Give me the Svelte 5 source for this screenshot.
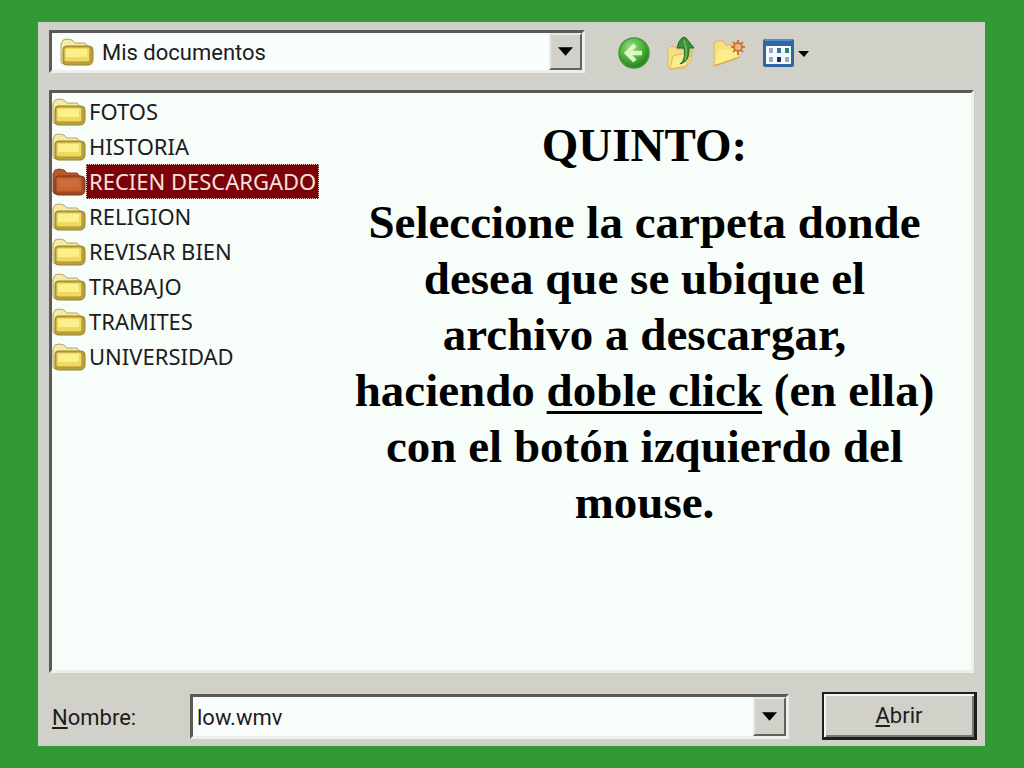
<script lang="ts">
  const folders = [
    "FOTOS",
    "HISTORIA",
    "RECIEN DESCARGADO",
    "RELIGION",
    "REVISAR BIEN",
    "TRABAJO",
    "TRAMITES",
    "UNIVERSIDAD"
  ];

  let selected = $state("RECIEN DESCARGADO");
  let location = $state("Mis documentos");
  let fileName = $state("low.wmv");
</script>

{#snippet folderIcon()}
  <svg class="folder" viewBox="0 0 34 28" aria-hidden="true">
    <path class="folder-back" d="M1 23V6l2-4 4-1 5 1 3 3h10l2 2v4H7v15H4q-3 0-3-3Z" />
    <path class="folder-shade" d="M6 8h23q4 0 4 4v9q0 6-5 6H6q-3 0-3-4V12q0-4 3-4Z" />
    <path class="folder-front" d="M6 9h22q2 0 2 2v11q0 2-2 2H6q-2 0-2-2V11q0-2 2-2Z" />
    <path class="folder-glow" d="M6 11h21v8H6z" />
  </svg>
{/snippet}

{#snippet arrow()}
  <svg class="arrow" viewBox="0 0 16 9" aria-hidden="true">
    <path d="M0 0h16L8 9Z" />
  </svg>
{/snippet}

<main class="slide">
  <div class="dialog">
    <div class="toolbar">
      <div class="field location">
        {@render folderIcon()}
        <select bind:value={location} aria-label="Buscar en">
          <option>Mis documentos</option>
        </select>
        <span class="drop">{@render arrow()}</span>
      </div>

      <div class="tools">
        <button class="tool" aria-label="Atrás">
          <svg width="34" height="34" viewBox="0 0 34 34">
            <defs>
              <radialGradient id="ball" cx="0.4" cy="0.3" r="0.7">
                <stop offset="0" stop-color="#9bdc82" />
                <stop offset="0.55" stop-color="#51b43e" />
                <stop offset="1" stop-color="#23801f" />
              </radialGradient>
            </defs>
            <circle cx="17" cy="17" r="15" fill="url(#ball)" stroke="#3c9a35" stroke-width="1.5" />
            <path d="m18 9-8 8 8 8M10 17h15" fill="none" stroke="#e0f6c8" stroke-width="4.5" />
          </svg>
        </button>
        <button class="tool" aria-label="Subir un nivel">
          <svg width="30" height="36" viewBox="0 0 30 36">
            <path d="M2 13 4 11l5 1 2 2 15 0-1 12-6 7-16 1-1-2Z" fill="#f5df80" stroke="#dfb86c" />
            <path d="m4 34 3-13 19-5-6 15Z" fill="#fbee90" stroke="#dfb45c" />
            <path d="M14 29q6-4 4-16l-7 0q1-7 6-11l3 1 8 10-5 0q1 14-9 16Z" fill="#3a9138" stroke="#236b27" />
            <path d="M18 5q4 12 1 20" fill="none" stroke="#72bd5a" stroke-width="1.5" />
          </svg>
        </button>
        <button class="tool" aria-label="Crear nueva carpeta">
          <svg width="36" height="32" viewBox="0 0 36 32">
            <path d="M3 29V6l3-2h6l3 4h9l4 11Z" fill="#f8e07c" stroke="#e0b060" />
            <path d="m4 28 4-15 14 0 7 7Z" fill="#fdee8c" />
            <path d="M3 29 29 20" fill="none" stroke="#e0a850" stroke-width="1.5" />
            <path d="M27 3v15M20 10h14M22 5l10 10M32 5 22 15" stroke="#d17836" stroke-width="2" />
            <circle cx="27" cy="10" r="4" fill="#f2b27b" stroke="#bd6832" stroke-width="1.5" />
          </svg>
        </button>
        <button class="tool" aria-label="Vistas">
          <svg width="48" height="32" viewBox="0 0 48 32">
            <rect x="1" y="2" width="31" height="28" rx="2" fill="#3166a3" />
            <path d="M3 3h27" stroke="#4c92cb" stroke-width="2" />
            <path d="M4 9h25v18H4z" fill="#f6fcff" />
            <path d="M7 11h4v5H7zM7 20h4v5H7zM23 20h4v5h-4z" fill="#9baab9" />
            <path d="M15 11h4v5h-4z" fill="#3774a2" />
            <path d="M23 11h4v5h-4z" fill="#26866f" />
            <path d="M15 20h4v5h-4z" fill="#153762" />
            <path d="M36 14h11l-5 6Z" fill="#000" />
          </svg>
        </button>
      </div>
    </div>

    <div class="content">
      <ul class="folders">
        {#each folders as name}
          <li>
            <button
              class="row {selected === name ? 'selected' : ''}"
              onclick={() => (selected = name)}
            >
              {@render folderIcon()}
              <span class="name">{name}</span>
            </button>
          </li>
        {/each}
      </ul>

      <div class="instructions">
        <h1>QUINTO:</h1>
        <p>
          Seleccione la carpeta donde desea que se ubique el archivo a descargar,
          haciendo <u>doble click</u> (en ella) con el botón izquierdo del mouse.
        </p>
      </div>
    </div>

    <div class="footer">
      <label for="file-name"><u>N</u>ombre:</label>
      <div class="field">
        <input id="file-name" type="text" bind:value={fileName} />
        <button class="drop" aria-label="Mostrar nombres">{@render arrow()}</button>
      </div>
      <button class="open"><span><u>A</u>brir</span></button>
    </div>
  </div>
</main>

<style>
  :global(body) {
    background: #339933;
  }

  * {
    box-sizing: border-box;
    margin: 0;
    padding: 0;
  }

  .slide {
    min-height: 100vh;
    padding: 22px 39px 22px 38px;
    display: flex;
    background: #339933;
    color: #1c1c1c;
    font-family: Roboto, "Liberation Sans", sans-serif;
    font-size: 22px;
  }

  .dialog {
    flex: 1;
    display: flex;
    flex-direction: column;
    padding: 8px 8px 6px 11px;
    background: #d1d0c9;
  }

  button,
  input,
  select {
    font: inherit;
    color: inherit;
  }

  .toolbar {
    display: flex;
    align-items: center;
    gap: 32px;
  }

  .field {
    position: relative;
    display: flex;
    align-items: center;
    min-width: 0;
    height: 45px;
    padding-left: 4px;
    border: 3px solid;
    border-color: #5a5a57 #eeeeea #eeeeea #5a5a57;
    background: #f9fdfb;
  }

  .location {
    flex: 0 1 536px;
    height: 43px;
    padding-left: 8px;
  }

  .location .folder {
    margin-right: 8px;
  }

  .field select,
  .field input {
    flex: 1;
    min-width: 0;
    height: 100%;
    padding-top: 2px;
    border: 0;
    outline: 0;
    appearance: none;
    background: transparent;
  }

  .drop {
    flex: none;
    display: flex;
    align-items: center;
    justify-content: center;
    width: 33px;
    height: 100%;
    border: 2px solid;
    border-color: #e8e8e4 #62625f #62625f #e8e8e4;
    background: #d1d0c9;
  }

  .location .drop {
    position: absolute;
    top: 0;
    right: 0;
    pointer-events: none;
  }

  .arrow {
    width: 15px;
    height: 9px;
    fill: #000;
  }

  .tools {
    display: flex;
    align-items: center;
    gap: 15px;
    padding-top: 2px;
  }

  .tool {
    display: flex;
    border: 0;
    background: none;
  }

  .folder {
    flex: none;
    width: 34px;
    height: 28px;
  }

  .folder-back {
    fill: #f6eaa4;
    stroke: #b5a565;
  }

  .folder-shade {
    fill: #b9a23c;
    stroke: #97842f;
  }

  .folder-front {
    fill: #f0d95c;
    stroke: #a8923a;
  }

  .folder-glow {
    fill: #fbf08c;
  }

  .content {
    flex: 1;
    display: grid;
    grid-template-columns: 290px 1fr;
    margin: 17px 3px 19px 0;
    border: 3px solid;
    border-color: #5a5a57 #eeeeea #eeeeea #5a5a57;
    background: #f7fdf9;
  }

  .folders {
    padding-top: 1px;
    list-style: none;
    font-family: "Noto Sans", "Open Sans", sans-serif;
  }

  .row {
    display: flex;
    align-items: center;
    height: 35px;
    border: 0;
    background: none;
    white-space: nowrap;
  }

  .name {
    padding: 0 2px;
    border: 1px solid transparent;
    line-height: 33px;
  }

  .selected .name {
    border: 1px dotted #e9c9c4;
    background: #7b0209;
    color: #f7e3dc;
  }

  .selected .folder-back {
    fill: #b65a30;
    stroke: #8b3f22;
  }

  .selected .folder-shade {
    fill: #a04a22;
    stroke: #7f3719;
  }

  .selected .folder-front {
    fill: #c9632f;
    stroke: #9a4722;
  }

  .selected .folder-glow {
    fill: #cf6c3a;
  }

  .instructions {
    padding: 24px 36px 24px 12px;
    color: #000;
    font-family: "Liberation Serif", serif;
    font-size: 47px;
    font-weight: bold;
    line-height: 56px;
    text-align: center;
  }

  .instructions h1 {
    margin-bottom: 21px;
    font-size: 47px;
  }

  .instructions u {
    text-decoration-thickness: 3px;
    text-underline-offset: 5px;
  }

  .footer {
    display: grid;
    grid-template-columns: 108px 1fr 155px;
    column-gap: 33px;
    align-items: center;
  }

  .footer label {
    padding: 2px 0 0 3px;
  }

  .open {
    height: 48px;
    border: 2px solid #1d1d1d;
    border-right-width: 3px;
    border-bottom-width: 3px;
    background: #d1d0c9;
    box-shadow: inset 2px 2px #f4f4f0, inset -2px -2px #777773;
  }
</style>
